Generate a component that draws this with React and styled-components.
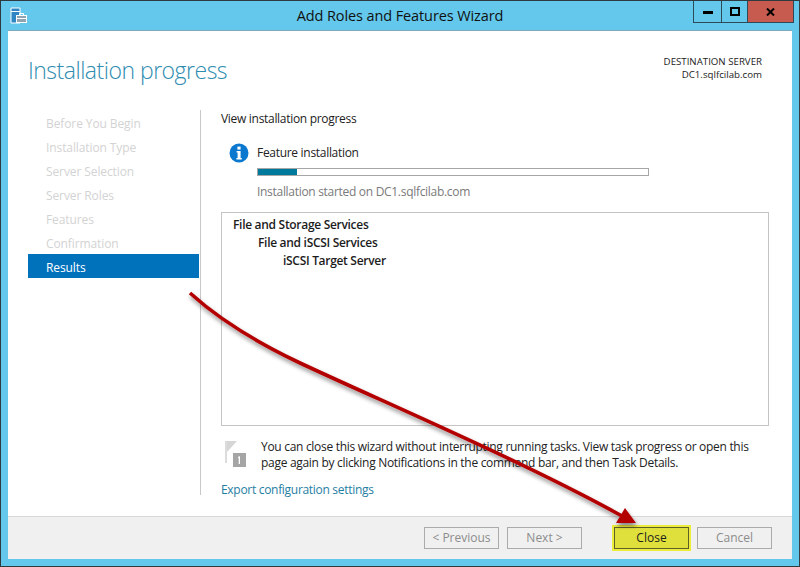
import React from "react";
import styled, { createGlobalStyle } from "styled-components";

const GlobalStyle = createGlobalStyle`
  html, body {
    margin: 0;
    padding: 0;
    background: #2b2b2b;
  }
  body {
    font-family: "Open Sans", "Noto Sans", sans-serif;
  }
`;

const Window = styled.div`
  position: relative;
  width: 800px;
  height: 567px;
  box-sizing: border-box;
  border: 1px solid #2f3a40;
  border-right-color: #3a3f44;
  background: #63c8ec;
  display: flex;
  flex-direction: column;
  overflow: hidden;
`;

const TitleBar = styled.div`
  height: 29px;
  flex: none;
  display: grid;
  grid-template-columns: 1fr auto 1fr;
`;

const AppIcon = styled.div`
  padding: 6px 0 0 9px;
`;

const Title = styled.div`
  font-size: 14.5px;
  line-height: 30px;
  color: #111;
  letter-spacing: -0.1px;
`;

const Controls = styled.div`
  justify-self: end;
  margin-right: 5px;
  height: 21px;
  display: flex;
  border: 1px solid #2d4a58;
  border-top: 0;
`;

const CaptionButton = styled.div`
  width: ${(p) => p.$width}px;
  display: flex;
  align-items: center;
  justify-content: center;
  background: ${(p) => p.$bg || "transparent"};
  border-left: ${(p) => (p.$first ? "0" : "1px solid #2d4a58")};
`;

const Client = styled.div`
  flex: 1;
  margin: 0 7px 7px;
  background: #fff;
  display: flex;
  flex-direction: column;
  min-height: 0;
  border-top: 1px solid #7fa9bb;
`;

const Header = styled.div`
  height: 79px;
  flex: none;
  display: flex;
  justify-content: space-between;
  padding: 0 30px 0 20px;
`;

const PageTitle = styled.h1`
  margin: 21px 0 0;
  font-size: 23px;
  line-height: 36px;
  font-weight: 300;
  letter-spacing: -0.5px;
  color: #2e8cb0;
`;

const ServerInfo = styled.div`
  margin-top: 24px;
  text-align: right;
  font-size: 9.7px;
  line-height: 13px;
  color: #222;
`;

const Body = styled.div`
  flex: 1;
  display: flex;
  min-height: 0;
`;

const Sidebar = styled.nav`
  width: 193px;
  flex: none;
  box-sizing: border-box;
  padding: 0 0 0 20px;
  margin-bottom: 21px;
  border-right: 1px solid #c8c8c8;
`;

const NavItem = styled.div`
  width: 171px;
  height: 24px;
  box-sizing: border-box;
  padding: 2px 0 0 18px;
  font-size: 12px;
  line-height: 24px;
  letter-spacing: -0.1px;
  color: ${(p) => (p.$active ? "#fff" : "#d3d3d3")};
  background: ${(p) => (p.$active ? "#0072bc" : "transparent")};
`;

const Main = styled.div`
  flex: 1;
  min-width: 0;
  padding: 1px 23px 0 20px;
  font-size: 12px;
  letter-spacing: -0.3px;
  color: #222;
`;

const Lead = styled.div`
  line-height: 16px;
`;

const Status = styled.div`
  display: grid;
  grid-template-columns: 36px 392px;
  margin-top: 16px;
`;

const InfoIcon = styled.div`
  padding: 0 0 0 8px;
`;

const StatusTitle = styled.div`
  line-height: 20px;
`;

const ProgressTrack = styled.div`
  height: 6px;
  margin-top: 5px;
  border: 1px solid #a6a6a6;
  width: 390px;
  background: #fff;
`;

const ProgressFill = styled.div`
  height: 100%;
  background: #007a9c;
`;

const StatusNote = styled.div`
  line-height: 16px;
  margin-top: 8px;
  color: #7a7a7a;
`;

const ResultBox = styled.div`
  height: 214px;
  box-sizing: border-box;
  margin-top: 12px;
  border: 1px solid #c4c4c4;
  padding: 3px 11px;
  font-weight: 600;
  color: #1c1c1c;
`;

const ResultLine = styled.div`
  line-height: 18px;
  padding-left: ${(p) => p.$indent * 25}px;
`;

const Notice = styled.div`
  display: flex;
  margin-top: 13px;
`;

const FlagWrap = styled.div`
  width: 40px;
  flex: none;
  padding: 2px 0 0 4px;
  box-sizing: border-box;
`;

const NoticeText = styled.div`
  line-height: 16px;
  white-space: nowrap;
`;

const ExportLink = styled.a`
  display: block;
  margin-top: 10px;
  line-height: 16px;
  color: #1f7ea3;
`;

const Footer = styled.div`
  height: 43px;
  flex: none;
  box-sizing: border-box;
  border-top: 1px solid #d8d8d8;
  background: #f0f0f0;
  display: flex;
  align-items: flex-start;
  padding: 10px 20px 0 0;
  justify-content: flex-end;
`;

const Button = styled.div`
  width: 75px;
  height: 22px;
  margin-left: ${(p) => p.$gap}px;
  box-sizing: border-box;
  border: 1px solid ${(p) => (p.$primary ? "#5e5e2a" : "#ababab")};
  background: ${(p) => (p.$primary ? "#e0e03c" : "#f0f0f0")};
  outline: ${(p) => (p.$primary ? "2px solid #ecec3a" : "none")};
  color: ${(p) => (p.$primary ? "#1c1c1c" : "#8c8c8c")};
  font-size: 12px;
  line-height: 20px;
  text-align: center;
`;

const Overlay = styled.svg`
  position: absolute;
  left: -1px;
  top: -1px;
  pointer-events: none;
`;

const steps = [
  "Before You Begin",
  "Installation Type",
  "Server Selection",
  "Server Roles",
  "Features",
  "Confirmation",
  "Results",
];

const results = ["File and Storage Services", "File and iSCSI Services", "iSCSI Target Server"];

const ServerManagerIcon = () => (
  <svg width="17" height="17" viewBox="0 0 17 17">
    <path d="M1 1h9v15H1z" fill="#2e86c4" stroke="#fff" />
    <path d="M1 4.5h9" stroke="#fff" />
    <rect x="6.5" y="8.5" width="10" height="7" fill="#8fa3b0" stroke="#fff" />
    <path d="M9.5 8.5V6.5h4v2M6.5 11.5h10" fill="none" stroke="#fff" />
  </svg>
);

const Info = () => (
  <svg width="20" height="20" viewBox="0 0 20 20">
    <circle cx="10" cy="10" r="9.5" fill="#0b78d0" />
    <rect x="8.4" y="3.6" width="3.2" height="3" fill="#fff" />
    <path d="M7.6 8h4v7h1.2v1.4H7.4V15h1.2V9.4h-1z" fill="#fff" />
  </svg>
);

const FlagIcon = () => (
  <svg width="22" height="27" viewBox="0 0 22 27">
    <rect x="0" y="0" width="2" height="22" fill="#dcdcdc" />
    <path d="M2 0h10L2 11z" fill="#d6d6d6" />
    <rect x="8" y="12" width="13" height="14" fill="#a5a5a5" />
    <path d="M13 16l2-1v8h-1.3v-6l-.7.3z" fill="#fff" />
  </svg>
);

const Arrow = () => (
  <Overlay width="800" height="567" viewBox="0 0 800 567">
    <defs>
      <filter id="arrowShadow" x="-5%" y="-5%" width="110%" height="110%">
        <feDropShadow dx="1" dy="3" stdDeviation="2" floodColor="#000" floodOpacity="0.45" />
      </filter>
    </defs>
    <g filter="url(#arrowShadow)">
      <path
        d="M190 293C222 322 262 345 300 363C390 405 520 460 622 516"
        fill="none"
        stroke="#b30000"
        strokeWidth="3.6"
      />
      <path d="M636 523L616 523L625 508z" fill="#b30000" />
    </g>
  </Overlay>
);

const App = () => (
  <>
    <GlobalStyle />
    <Window>
      <TitleBar>
        <AppIcon>
          <ServerManagerIcon />
        </AppIcon>
        <Title>Add Roles and Features Wizard</Title>
        <Controls>
          <CaptionButton $width={27} $first>
            <svg width="10" height="4" viewBox="0 0 10 4">
              <rect width="10" height="3" y="1" fill="#000" />
            </svg>
          </CaptionButton>
          <CaptionButton $width={25}>
            <svg width="10" height="9" viewBox="0 0 10 9">
              <rect x="1" y="1" width="8" height="7" fill="none" stroke="#000" strokeWidth="2" />
            </svg>
          </CaptionButton>
          <CaptionButton $width={45} $bg="#c75b50">
            <svg width="9" height="8" viewBox="0 0 9 8">
              <path d="M1 0.5L8 7.5M8 0.5L1 7.5" stroke="#000" strokeWidth="2" />
            </svg>
          </CaptionButton>
        </Controls>
      </TitleBar>
      <Client>
        <Header>
          <PageTitle>Installation progress</PageTitle>
          <ServerInfo>
            <div>DESTINATION SERVER</div>
            <div>DC1.sqlfcilab.com</div>
          </ServerInfo>
        </Header>
        <Body>
          <Sidebar>
            {steps.map((step) => (
              <NavItem key={step} $active={step === "Results"}>
                {step}
              </NavItem>
            ))}
          </Sidebar>
          <Main>
            <Lead>View installation progress</Lead>
            <Status>
              <InfoIcon>
                <Info />
              </InfoIcon>
              <div>
                <StatusTitle>Feature installation</StatusTitle>
                <ProgressTrack>
                  <ProgressFill style={{ width: "10%" }} />
                </ProgressTrack>
                <StatusNote>Installation started on DC1.sqlfcilab.com</StatusNote>
              </div>
            </Status>
            <ResultBox>
              {results.map((line, i) => (
                <ResultLine key={line} $indent={i}>
                  {line}
                </ResultLine>
              ))}
            </ResultBox>
            <Notice>
              <FlagWrap>
                <FlagIcon />
              </FlagWrap>
              <NoticeText>
                You can close this wizard without interrupting running tasks. View task progress or open this
                <br />
                page again by clicking Notifications in the command bar, and then Task Details.
              </NoticeText>
            </Notice>
            <ExportLink>Export configuration settings</ExportLink>
          </Main>
        </Body>
        <Footer>
          <Button>&lt; Previous</Button>
          <Button $gap={8}>Next &gt;</Button>
          <Button $gap={32} $primary>
            Close
          </Button>
          <Button $gap={8}>Cancel</Button>
        </Footer>
      </Client>
      <Arrow />
    </Window>
  </>
);

export default App;
